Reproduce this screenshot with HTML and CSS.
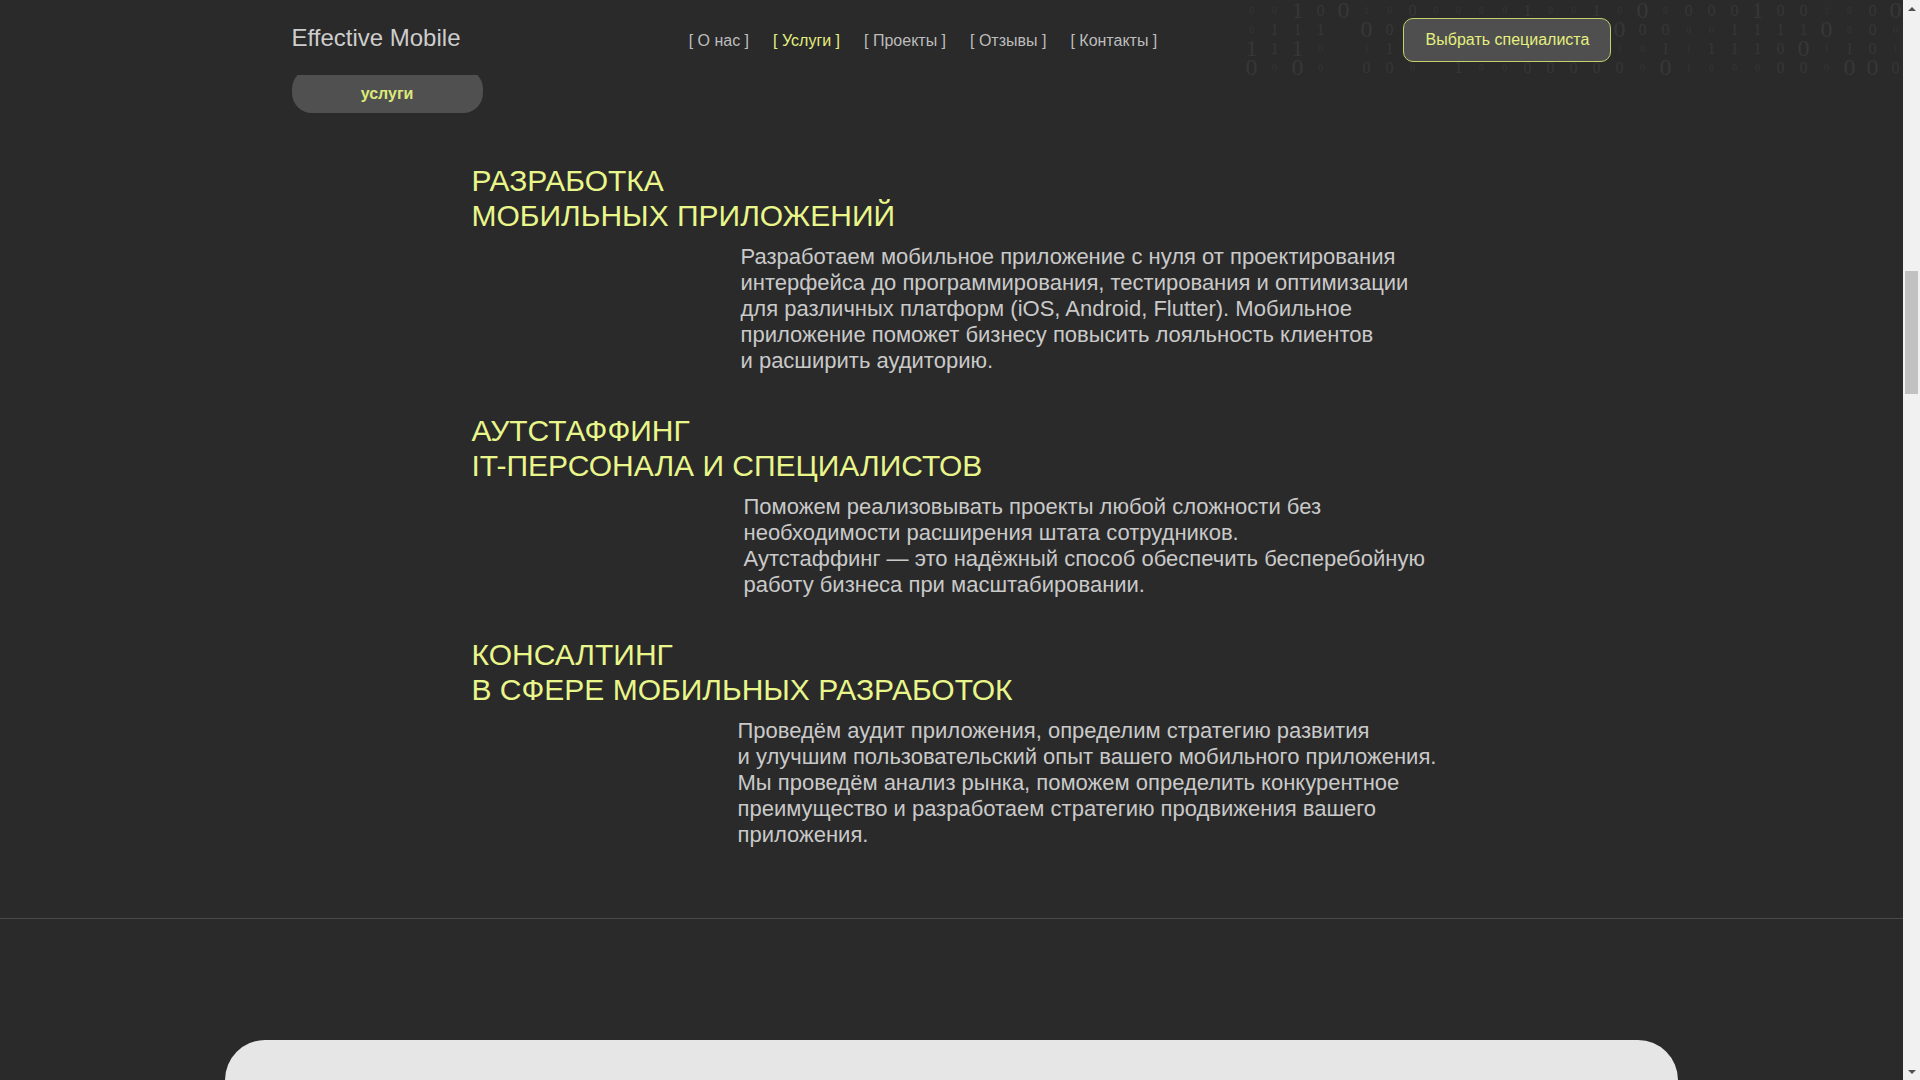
FILE: index.html
```html
<!DOCTYPE html>
<html lang="ru">
<head>
<meta charset="utf-8">
<title>Effective Mobile — услуги</title>
<link rel="stylesheet" href="styles.css">
</head>
<body>
<div class="page">
<header class="site-header">
  <div class="binary" aria-hidden="true">
    <span class="s">0</span><span class="s">0</span><span class="l">1</span><span class="m">0</span><span class="l">0</span><span class="s">1</span><span class="s">0</span><span class="m">0</span><span class="s">0</span><span class="s">0</span><span class="s">0</span><span class="s">0</span><span class="m">1</span><span class="s">0</span><span class="s">0</span><span class="m">1</span><span class="s">0</span><span class="l">0</span><span class="s">0</span><span class="m">0</span><span class="m">0</span><span class="m">0</span><span class="l">1</span><span class="m">0</span><span class="m">0</span><span class="s">1</span><span class="s">0</span><span class="m">0</span><span class="l">0</span>
    <span class="s">0</span><span class="m">1</span><span class="m">1</span><span class="m">1</span><span></span><span class="l">0</span><span class="m">0</span><span class="m">0</span><span class="s">1</span><span class="m">0</span><span class="s">0</span><span class="m">1</span><span class="m">0</span><span class="s">0</span><span class="m">1</span><span class="s">0</span><span class="l">0</span><span class="m">0</span><span class="m">0</span><span class="s">0</span><span class="s">0</span><span class="m">1</span><span class="m">1</span><span class="m">1</span><span class="m">1</span><span class="l">0</span><span class="s">0</span><span class="m">0</span><span class="s">0</span>
    <span class="l">1</span><span class="m">1</span><span class="l">1</span><span class="s">0</span><span></span><span class="s">1</span><span class="m">1</span><span class="m">1</span><span class="s">0</span><span class="s">1</span><span class="m">0</span><span class="s">1</span><span class="s">0</span><span class="m">1</span><span class="s">0</span><span class="s">1</span><span class="s">1</span><span class="s">0</span><span class="m">1</span><span class="s">1</span><span class="m">1</span><span class="m">1</span><span class="m">1</span><span class="m">0</span><span class="l">0</span><span class="s">1</span><span class="m">1</span><span class="m">0</span><span class="s">1</span>
    <span class="l">0</span><span class="s">0</span><span class="l">0</span><span class="s">0</span><span></span><span class="m">0</span><span class="m">0</span><span class="s">0</span><span></span><span class="m">1</span><span class="s">0</span><span class="s">0</span><span class="m">0</span><span class="m">0</span><span class="m">0</span><span class="m">0</span><span class="m">0</span><span class="s">0</span><span class="l">0</span><span class="s">1</span><span class="s">0</span><span class="s">0</span><span class="s">0</span><span class="m">0</span><span class="m">0</span><span class="s">0</span><span class="l">0</span><span class="l">0</span><span class="m">0</span>
  </div>
  <div class="container header-inner">
    <a class="logo" href="#">Effective Mobile</a>
    <nav class="nav">
      <a href="#">[ О нас ]</a>
      <a href="#" class="active">[ Услуги ]</a>
      <a href="#">[ Проекты ]</a>
      <a href="#">[ Отзывы ]</a>
      <a href="#">[ Контакты ]</a>
    </nav>
    <button class="cta" type="button">Выбрать специалиста</button>
  </div>
</header>

<main class="container services">
  <div class="tag">услуги</div>

  <div class="service-list">
    <section class="service">
      <h2 class="service-title">РАЗРАБОТКА<br>МОБИЛЬНЫХ ПРИЛОЖЕНИЙ</h2>
      <p class="service-text service-text--a">Разработаем мобильное приложение с нуля от проектирования<br>интерфейса до программирования, тестирования и оптимизации<br>для различных платформ (iOS, Android, Flutter). Мобильное<br>приложение поможет бизнесу повысить лояльность клиентов<br>и расширить аудиторию.</p>
    </section>

    <section class="service">
      <h2 class="service-title">АУТСТАФФИНГ<br>IT-ПЕРСОНАЛА И СПЕЦИАЛИСТОВ</h2>
      <p class="service-text service-text--b">Поможем реализовывать проекты любой сложности без<br>необходимости расширения штата сотрудников.<br>Аутстаффинг — это надёжный способ обеспечить бесперебойную<br>работу бизнеса при масштабировании.</p>
    </section>

    <section class="service">
      <h2 class="service-title">КОНСАЛТИНГ<br>В СФЕРЕ МОБИЛЬНЫХ РАЗРАБОТОК</h2>
      <p class="service-text service-text--c">Проведём аудит приложения, определим стратегию развития<br>и улучшим пользовательский опыт вашего мобильного приложения.<br>Мы проведём анализ рынка, поможем определить конкурентное<br>преимущество и разработаем стратегию продвижения вашего<br>приложения.</p>
    </section>
  </div>
</main>

<hr class="divider">

<section class="card"></section>
</div>

<div class="scrollbar" aria-hidden="true">
  <span class="sb-arrow sb-up"></span>
  <div class="sb-track"><span class="sb-thumb"></span></div>
  <span class="sb-arrow sb-down"></span>
</div>
</body>
</html>
```

FILE: styles.css
```css
* {
  box-sizing: border-box;
}

html, body {
  margin: 0;
  padding: 0;
}

body {
  background: #2a2a2a;
  color: #c9c9c9;
  font-family: "Liberation Sans", Arial, sans-serif;
}

.page {
  margin-right: 17px;
}

.container {
  width: 1320px;
  margin: 0 auto;
}

/* ---------- header ---------- */
.site-header {
  position: sticky;
  top: 0;
  z-index: 10;
  height: 75px;
  background: #2a2a2a;
  overflow: hidden;
}

.binary {
  position: absolute;
  top: 1px;
  left: 1240px;
  display: grid;
  grid-template-columns: repeat(29, 23px);
  grid-auto-rows: 19px;
  font-family: "Liberation Serif", "Times New Roman", serif;
  color: #373737;
  line-height: 19px;
  text-align: center;
  pointer-events: none;
}

.binary span {
  display: flex;
  align-items: center;
  justify-content: center;
}

.binary .s { font-size: 10px; color: #353535; }
.binary .m { font-size: 16px; }
.binary .l { font-size: 24px; }

.header-inner {
  position: relative;
  z-index: 1;
  display: flex;
  align-items: center;
  justify-content: space-between;
  height: 100%;
  padding-top: 4px;
}

.logo {
  font-size: 24px;
  color: #cdcdcd;
  text-decoration: none;
  margin-top: -4px;
}

.nav {
  display: flex;
  gap: 24px;
  margin-right: 18px;
  padding-top: 2px;
}

.nav a {
  font-size: 16px;
  color: #bdbdbd;
  text-decoration: none;
}

.nav a.active {
  color: #e4f07f;
}

.cta {
  width: 208px;
  height: 44px;
  background: #4f4f4f;
  border: 1px solid #c6d06c;
  border-radius: 10px;
  color: #e4f07f;
  font-family: "Liberation Sans", Arial, sans-serif;
  font-size: 16px;
  cursor: pointer;
}

/* ---------- services ---------- */
.services {
  padding-bottom: 70px;
}

.tag {
  width: 191px;
  height: 44px;
  margin-top: -6px;
  border-radius: 20px;
  background: #505050;
  color: #dde97a;
  font-size: 16px;
  font-weight: bold;
  display: flex;
  align-items: center;
  justify-content: center;
  padding-top: 5px;
}

.service-list {
  display: flex;
  flex-direction: column;
  gap: 40px;
  margin-top: 51px;
  padding-left: 180px;
}

.service-title {
  margin: 0;
  font-size: 30px;
  font-weight: normal;
  line-height: 34.5px;
  color: #e9f68a;
}

.service-text {
  margin: 11px 0 0;
  font-size: 22px;
  line-height: 26px;
  color: #c9c9c9;
  white-space: nowrap;
}

.service-text--a { margin-left: 269px; }
.service-text--b { margin-left: 272px; }
.service-text--c { margin-left: 266px; }

.divider {
  margin: 0;
  border: 0;
  height: 1px;
  background: #4a4a4a;
}

.card {
  width: 1453px;
  height: 420px;
  margin: 121px auto 0;
  background: #e6e6e6;
  border-radius: 40px 40px 0 0;
}

/* ---------- browser scrollbar ---------- */
.scrollbar {
  position: fixed;
  top: 0;
  right: 0;
  z-index: 20;
  width: 17px;
  height: 100vh;
  background: #f1f1f1;
  display: flex;
  flex-direction: column;
}

.sb-arrow {
  height: 17px;
  display: flex;
  align-items: center;
  justify-content: center;
}

.sb-arrow::before {
  content: "";
  border-left: 4px solid transparent;
  border-right: 4px solid transparent;
}

.sb-up::before {
  border-bottom: 4px solid #505050;
}

.sb-down::before {
  border-top: 4px solid #505050;
}

.sb-track {
  flex: 1;
  padding: 254px 2px 0;
}

.sb-thumb {
  display: block;
  height: 123px;
  background: #c1c1c1;
}
```
